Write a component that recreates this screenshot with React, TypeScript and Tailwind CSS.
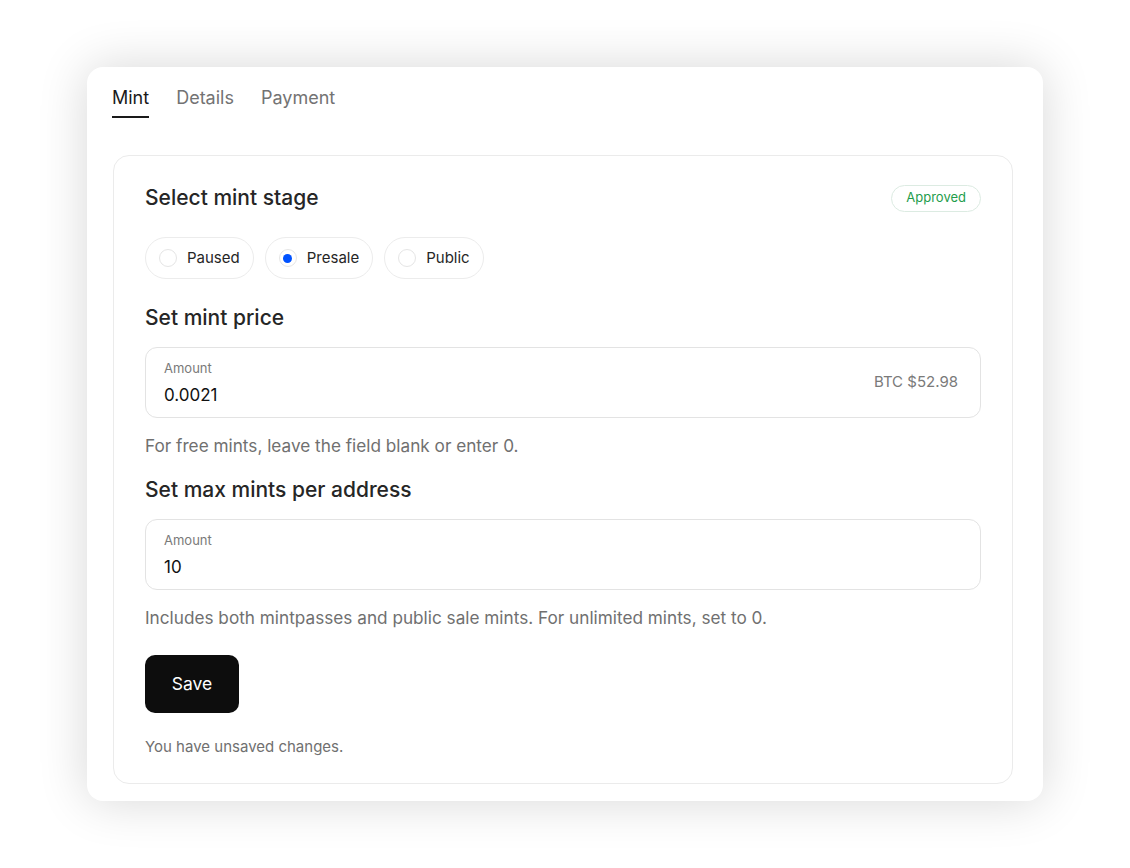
import React from 'react';

const stages = ['Paused', 'Presale', 'Public'];

function Field({ value, suffix }: { value: string; suffix?: string }) {
  return (
    <div className="flex items-center h-[71px] rounded-xl border border-[#e3e3e3] px-[18px]">
      <div className="flex flex-col flex-1">
        <span className="text-[13px] leading-[18px] text-[#7a7a7a]">Amount</span>
        <span className="mt-[6px] text-[17px] leading-[24px] text-[#111]">{value}</span>
      </div>
      {suffix && <span className="text-[15px] text-[#7a7a7a] mr-[4px]">{suffix}</span>}
    </div>
  );
}

export default function App() {
  const selected = 'Presale';
  return (
    <div className="min-h-[868px] bg-white flex items-center justify-center" style={{ fontFamily: 'Inter, "Noto Sans", sans-serif' }}>
      <div className="w-[956px] h-[734px] bg-white rounded-2xl shadow-[0_0_50px_rgba(0,0,0,0.16)] pt-[19px] pl-[25px] pr-[30px]">
        <nav className="flex gap-[27px] text-[18px] leading-[24px]">
          <div className="flex flex-col">
            <span className="text-[#1a1a1a]">Mint</span>
            <span className="mt-[6px] h-[2px] bg-[#1a1a1a]" />
          </div>
          <span className="text-[#737373]">Details</span>
          <span className="text-[#737373]">Payment</span>
        </nav>

        <section className="ml-px mt-[37px] h-[629px] rounded-2xl border border-[#ebebeb] px-[31px] pt-[28px]">
          <div className="flex items-center justify-between">
            <h2 className="text-[21px] leading-[28px] font-medium text-[#262626]">Select mint stage</h2>
            <span className="h-[27px] px-[14px] flex items-center rounded-full border border-[#dcebe2] text-[13px] text-[#1f9d4c]">Approved</span>
          </div>

          <div className="mt-[25px] flex gap-[11px]">
            {stages.map((s) => (
              <label key={s} className="h-[42px] flex items-center gap-[10px] pl-[13px] pr-[13px] rounded-full border border-[#ececec] text-[15px] text-[#262626]">
                <span className="w-[18px] h-[18px] rounded-full border border-[#e5e5e5] flex items-center justify-center">
                  {s === selected && <span className="w-[9px] h-[9px] rounded-full bg-[#0052ff]" />}
                </span>
                {s}
              </label>
            ))}
          </div>

          <h2 className="mt-[25px] text-[21px] leading-[28px] font-medium text-[#262626]">Set mint price</h2>
          <div className="mt-[15px]">
            <Field value="0.0021" suffix="BTC $52.98" />
          </div>
          <p className="mt-[16px] text-[17.2px] leading-[24px] text-[#707070]">For free mints, leave the field blank or enter 0.</p>

          <h2 className="mt-[18px] text-[21px] leading-[28px] font-medium text-[#262626]">Set max mints per address</h2>
          <div className="mt-[15px]">
            <Field value="10" />
          </div>
          <p className="mt-[16px] text-[17.2px] leading-[24px] text-[#707070]">Includes both mintpasses and public sale mints. For unlimited mints, set to 0.</p>

          <button className="mt-[25px] w-[94px] h-[58px] rounded-[10px] bg-[#0d0d0d] text-white text-[17.5px]">Save</button>
          <p className="mt-[24px] text-[15px] leading-[20px] text-[#707070]">You have unsaved changes.</p>
        </section>
      </div>
    </div>
  );
}
